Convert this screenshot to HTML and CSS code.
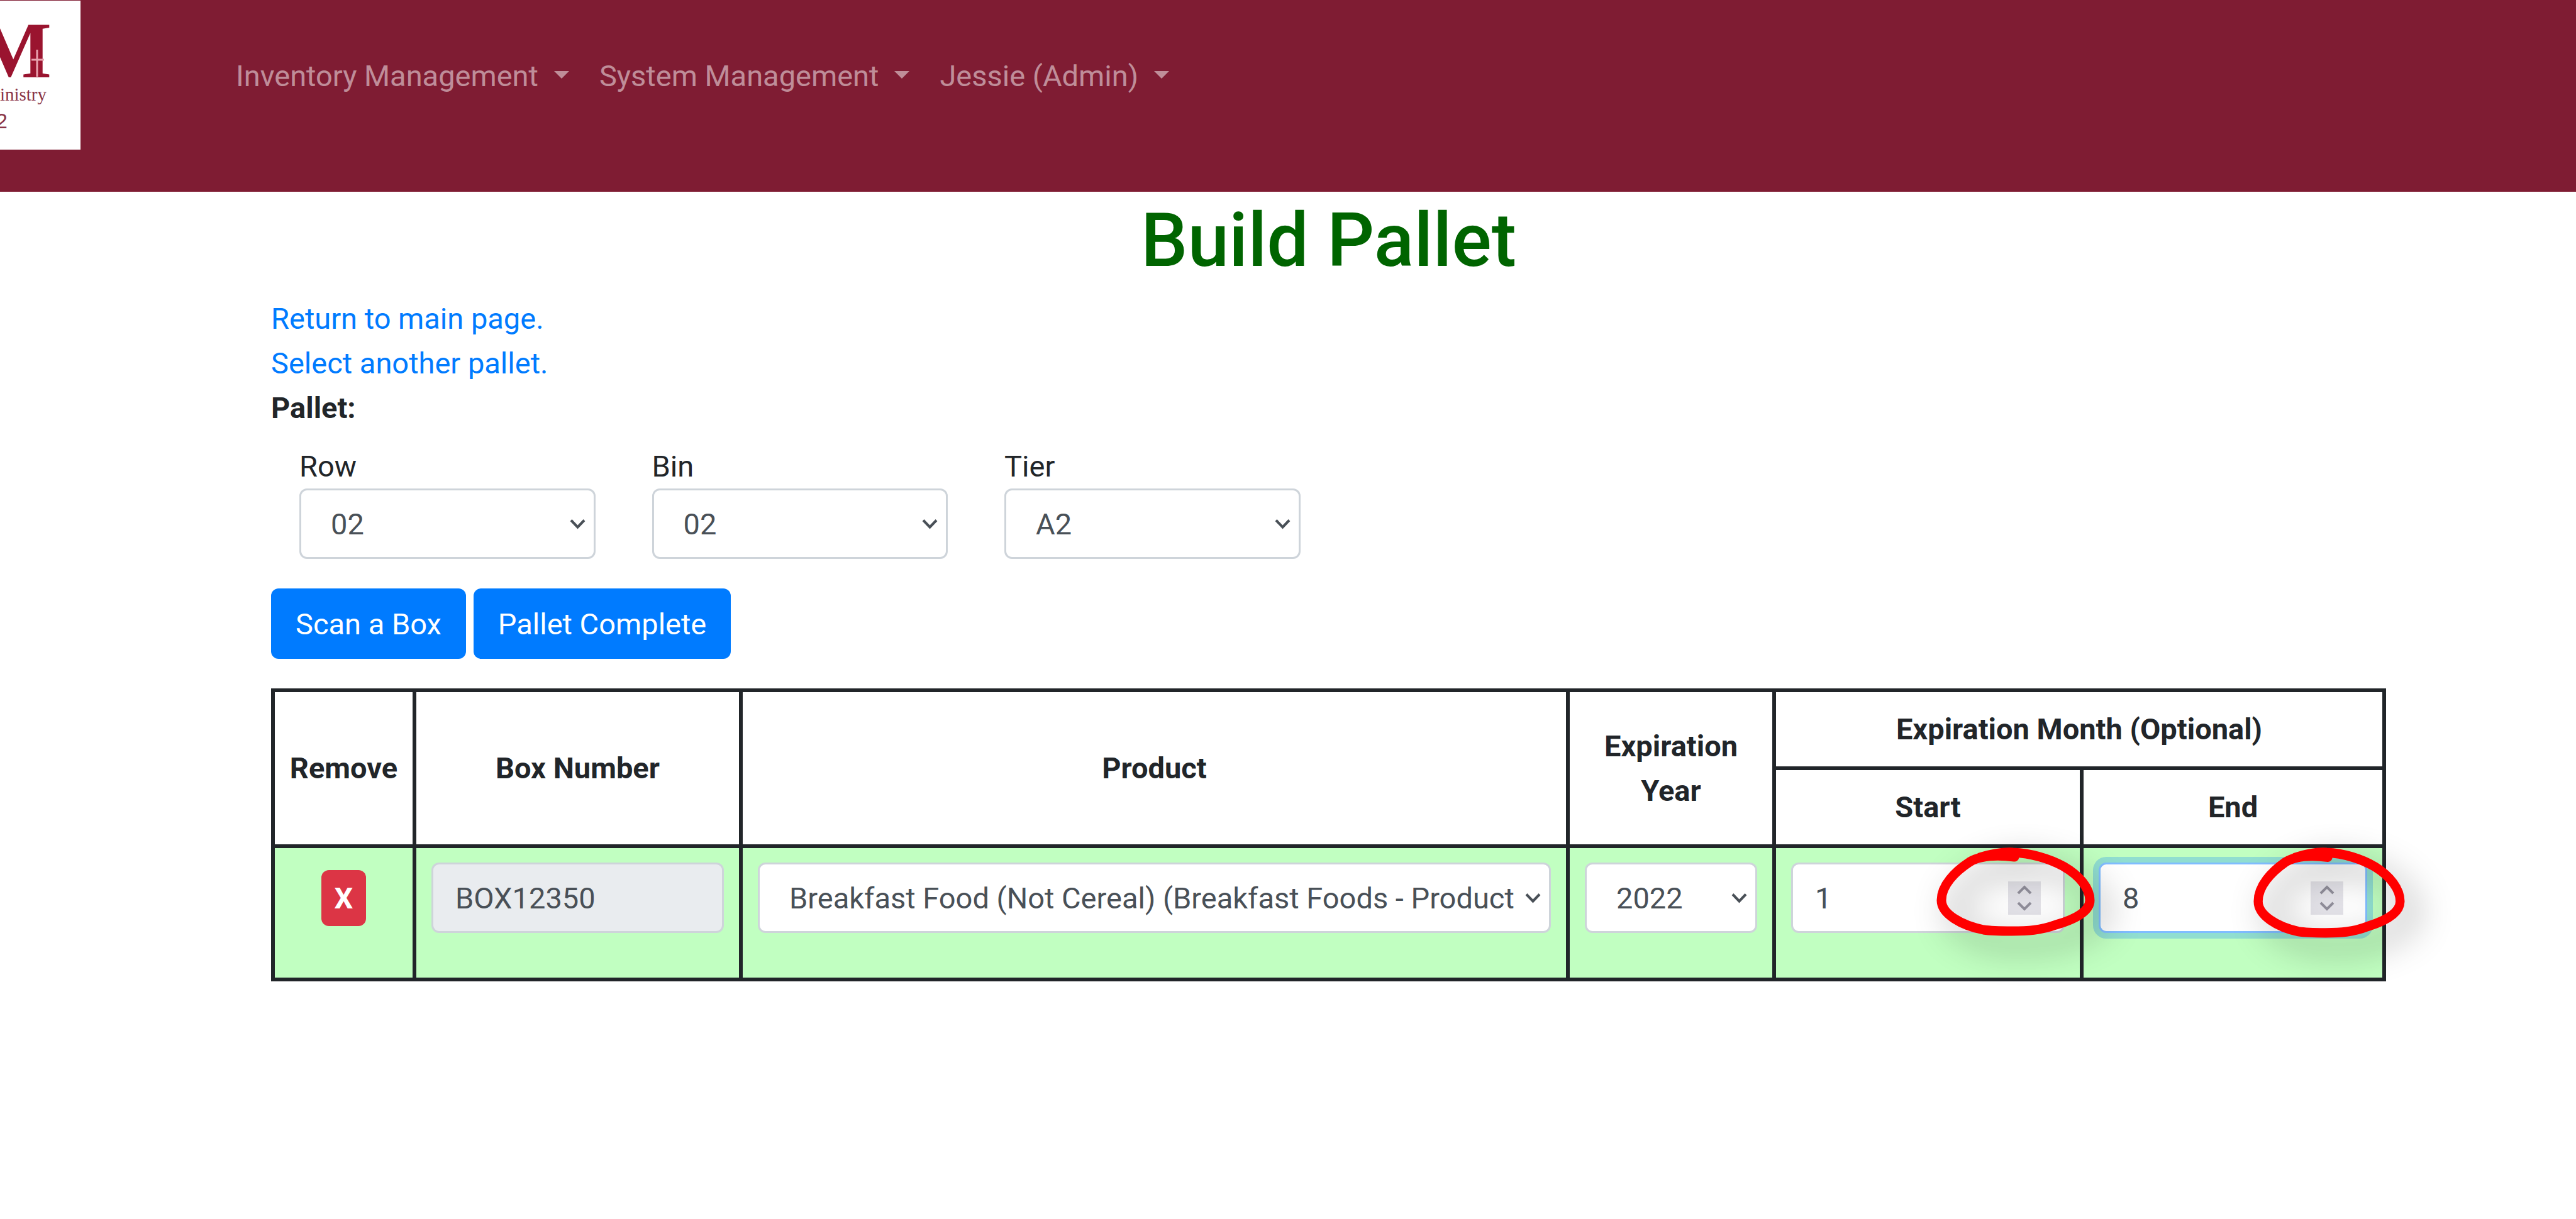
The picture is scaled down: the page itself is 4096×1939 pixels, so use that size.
FILE: index.html
```html
<!DOCTYPE html>
<html lang="en">
<head>
  <meta charset="utf-8">
  <title>Build Pallet</title>
  <meta name="viewport" content="width=device-width, initial-scale=1">
  <link rel="stylesheet" href="styles.css">
</head>
<body>
  <header class="topbar">
    <a class="logo" href="#" aria-label="Home">
      <svg class="logo-art" viewBox="0 0 128 237" aria-hidden="true">
        <text class="logo-letter" x="82" y="122" text-anchor="end">M</text>
        <path d="M59 78V121M50 94H70" stroke="#e9a3b0" stroke-width="3"/>
        <text class="logo-word" x="74" y="159" text-anchor="end">inistry</text>
        <text class="logo-year" x="12" y="203" text-anchor="end">2</text>
      </svg>
    </a>
    <nav class="menu">
      <a class="menu-link" href="#">Inventory Management</a>
      <a class="menu-link" href="#">System Management</a>
      <a class="menu-link" href="#">Jessie (Admin)</a>
    </nav>
  </header>

  <main class="page">
    <h1 class="title">Build Pallet</h1>
    <div><a class="link" href="#">Return to main page.</a></div>
    <div><a class="link" href="#">Select another pallet.</a></div>
    <div class="strong">Pallet:</div>

    <form class="location">
      <div class="location-field">
        <label for="row">Row</label>
        <select class="control select" id="row"><option>02</option></select>
      </div>
      <div class="location-field">
        <label for="bin">Bin</label>
        <select class="control select" id="bin"><option>02</option></select>
      </div>
      <div class="location-field">
        <label for="tier">Tier</label>
        <select class="control select" id="tier"><option>A2</option></select>
      </div>
    </form>

    <div class="actions">
      <button class="button" type="button">Scan a Box</button>
      <button class="button" type="button">Pallet Complete</button>
    </div>

    <table class="boxes">
      <colgroup>
        <col class="col-remove">
        <col class="col-number">
        <col>
        <col class="col-year">
        <col class="col-start">
        <col class="col-end">
      </colgroup>
      <thead>
        <tr>
          <th rowspan="2">Remove</th>
          <th rowspan="2">Box Number</th>
          <th rowspan="2">Product</th>
          <th rowspan="2">Expiration Year</th>
          <th colspan="2">Expiration Month (Optional)</th>
        </tr>
        <tr>
          <th>Start</th>
          <th>End</th>
        </tr>
      </thead>
      <tbody>
        <tr>
          <td><div class="remove-cell"><button class="remove" type="button" aria-label="Remove box">X</button></div></td>
          <td><div class="field"><input class="control" type="text" value="BOX12350" aria-label="Box number" disabled></div></td>
          <td><div class="field"><select class="control select" aria-label="Product"><option>Breakfast Food (Not Cereal) (Breakfast Foods - Product</option></select></div></td>
          <td><div class="field"><select class="control select" aria-label="Expiration year"><option>2022</option></select></div></td>
          <td>
            <div class="field">
              <input class="control number" type="number" min="1" max="12" value="1" aria-label="Start month">
              <svg class="ring ring-start" viewBox="0 0 252 142" preserveAspectRatio="none" aria-hidden="true">
                <path d="M69 16C85 11 105 7 122 8C150 9 180 18 202 30C228 45 244 65 244 84C244 100 225 113 190 123C165 132 145 133 120 133C98 133 88 133 75 131C40 124 8 106 8 84C8 60 30 38 53 23C68 14 90 11 124 15"/>
              </svg>
            </div>
          </td>
          <td>
            <div class="field">
              <input class="control number active" type="number" min="1" max="12" value="8" aria-label="End month">
              <svg class="ring ring-end" viewBox="0 0 252 142" preserveAspectRatio="none" aria-hidden="true">
                <path d="M69 16C85 11 105 7 122 8C150 9 180 18 202 30C228 45 244 65 244 84C244 100 225 113 190 123C165 132 145 133 120 133C98 133 88 133 75 131C40 124 8 106 8 84C8 60 30 38 53 23C68 14 90 11 124 15"/>
              </svg>
            </div>
          </td>
        </tr>
      </tbody>
    </table>
  </main>
</body>
</html>
```
FILE: styles.css
```css
* {
  box-sizing: border-box;
}

body {
  margin: 0;
  background: #fff;
  color: #212529;
  font: 400 47px/71px Roboto, sans-serif;
}

/* Top bar */
.topbar {
  display: flex;
  align-items: flex-start;
  padding: 1px 0 67px;
  background: #7f1c33;
}

.logo {
  flex: none;
  width: 128px;
  background: #fff;
}

.logo-art {
  display: block;
  width: 100%;
}

.logo-letter {
  font: 700 126px "Liberation Serif", serif;
  fill: #9a142f;
}

.logo-word {
  font: 400 29px "Liberation Serif", serif;
  fill: #8a3446;
}

.logo-year {
  font: 400 34px "Liberation Sans", sans-serif;
  fill: #8a3446;
}

.menu {
  display: flex;
  margin-left: 223px;
  padding-top: 84px;
}

.menu-link {
  padding: 0 24px;
  color: rgba(255, 255, 255, 0.5);
  text-decoration: none;
  white-space: nowrap;
}

.menu-link::after {
  content: "";
  display: inline-block;
  margin-left: 25px;
  border: 12px solid transparent;
  border-top-color: currentColor;
  border-bottom: 0;
  vertical-align: 12px;
}

/* Page body */
.page {
  padding: 7px 302px 48px 431px;
}

.title {
  margin: 0 0 17px;
  color: #006400;
  font-size: 118px;
  font-weight: 500;
  line-height: 142px;
  text-align: center;
}

.link {
  color: #007bff;
  text-decoration: none;
}

.strong {
  font-weight: 700;
}

.location {
  display: grid;
  grid-template-columns: repeat(6, 1fr);
  margin: 22px 0 47px;
}

.location-field {
  padding: 0 45px;
}

.location-field label {
  display: block;
}

/* Form controls */
.control {
  display: block;
  width: 100%;
  height: 112px;
  margin: 0;
  padding: 0 35px;
  border: 3px solid #ced4da;
  border-radius: 12px;
  background-color: #fff;
  color: #495057;
  font: inherit;
}

.control:disabled {
  background-color: #e9ecef;
  opacity: 1;
}

.select {
  appearance: none;
  padding: 0 47px;
  background-image: url("data:image/svg+xml,%3Csvg xmlns='http://www.w3.org/2000/svg' viewBox='0 0 25 17'%3E%3Cpath d='M2 2.500L12.500 13.500L23 2.500' fill='none' stroke='%23495057' stroke-width='4'/%3E%3C/svg%3E");
  background-position: right 13px center;
  background-repeat: no-repeat;
  background-size: 25px 17px;
}

.number::-webkit-inner-spin-button {
  appearance: none;
  align-self: center;
  width: 52px;
  height: 53px;
  margin: 0;
  background: #e4e3e9 url("data:image/svg+xml,%3Csvg xmlns='http://www.w3.org/2000/svg' viewBox='0 0 52 53'%3E%3Cpath d='M16 19L26 9L36 19M16 34L26 44L36 34' fill='none' stroke='%23918f9b' stroke-width='4'/%3E%3C/svg%3E") center / 100% 100% no-repeat;
  opacity: 1;
}

.active {
  border-color: #80bdff;
  box-shadow: 0 0 0 9px rgba(0, 123, 255, 0.25);
}

.actions {
  display: flex;
  gap: 12px;
  margin-bottom: 47px;
}

.button {
  height: 112px;
  padding: 0 39px;
  border: 0;
  border-radius: 12px;
  background: #007bff;
  color: #fff;
  font: inherit;
}

/* Boxes on the pallet */
.boxes {
  width: 100%;
  table-layout: fixed;
  border-collapse: collapse;
}

.boxes th,
.boxes td {
  border: 6px solid #212529;
  padding: 23px 24px 24px;
}

.boxes th {
  font-weight: 700;
}

.boxes th:first-child {
  padding-left: 12px;
  padding-right: 12px;
}

.boxes td {
  background: #c1ffc1;
  vertical-align: top;
}

.col-remove {
  width: 225px;
}

.col-number {
  width: 519px;
}

.col-year {
  width: 328px;
}

.col-start {
  width: 489px;
}

.col-end {
  width: 481px;
}

.field {
  position: relative;
  margin-bottom: 47px;
}

.remove-cell {
  display: flex;
  justify-content: center;
  padding-top: 12px;
}

.remove {
  width: 71px;
  height: 89px;
  padding: 0;
  border: 0;
  border-radius: 12px;
  background: #dc3545;
  color: #fff;
  font: inherit;
  font-weight: 700;
}

/* Hand-drawn highlight round each stepper */
.ring {
  position: absolute;
  z-index: 1;
  top: -24px;
  overflow: visible;
  fill: none;
  stroke: #f00;
  stroke-width: 15;
  stroke-linecap: round;
  stroke-linejoin: round;
  filter: drop-shadow(20px 20px 27px rgba(0, 0, 0, 0.4));
  pointer-events: none;
}

.ring-start {
  right: -48px;
  width: 252px;
  height: 142px;
}

.ring-end {
  right: -60px;
  width: 241px;
  height: 145px;
}
```
